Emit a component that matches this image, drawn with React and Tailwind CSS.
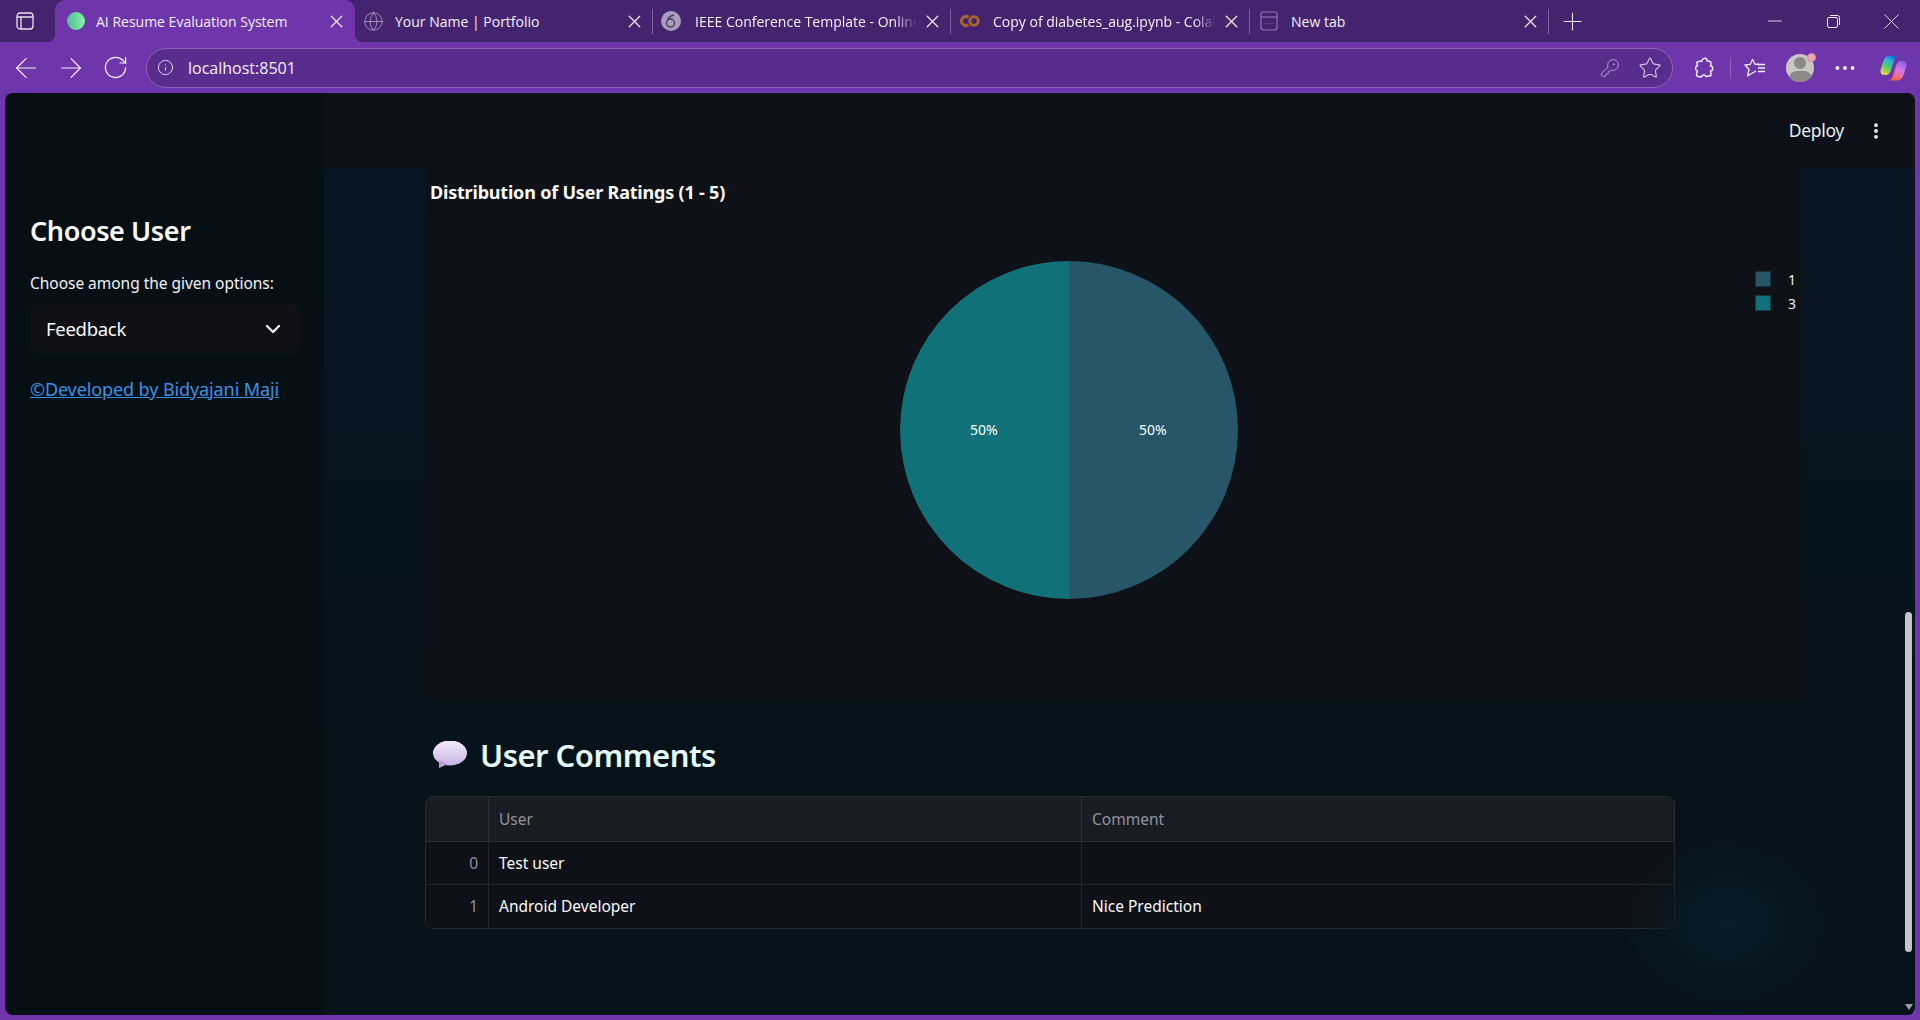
import React from 'react';
import { X, Plus, Minus, ArrowLeft, ArrowRight, RotateCw, Info, KeyRound, Star, Globe, EllipsisVertical, Ellipsis, ChevronDown } from 'lucide-react';

const Favicon = ({ kind }) => {
    if (kind === 'ai') return <span className="w-[18px] h-[18px] rounded-full bg-gradient-to-r from-[#4fbf94] to-[#86f2a6] shrink-0"></span>;
    if (kind === 'globe') return <Globe size={21} strokeWidth={1} className="text-[#a89cc0] shrink-0" />;
    if (kind === 'overleaf') return (
        <span className="w-[20px] h-[20px] rounded-full bg-[#a99cbc] shrink-0 flex items-center justify-center">
            <svg width="12" height="14" viewBox="0 0 12 14" fill="none" stroke="#45405a" strokeWidth="1.4"><circle cx="5.5" cy="9" r="4" /><path d="M9 1 C5 2 3 4 3 6" /></svg>
        </span>
    );
    if (kind === 'colab') return (
        <svg width="20" height="14" viewBox="0 0 20 14" fill="none" stroke="#a8642e" strokeWidth="3" className="shrink-0"><path d="M8.5 3.2 A4.5 4.5 0 1 0 8.5 10.8" /><circle cx="14" cy="7" r="4.2" /></svg>
    );
    return (
        <svg width="18" height="20" viewBox="0 0 18 20" fill="none" stroke="#8d76a8" strokeWidth="1.2" className="shrink-0"><rect x="1" y="1" width="16" height="18" rx="2.5" /><path d="M1 6h16" /><path d="M5.5 12.5h1M8.5 12.5h1M11.5 12.5h1" /></svg>
    );
};

const tabs = [
    { title: 'AI Resume Evaluation System', icon: 'ai', active: true, w: 'w-[300px]', pl: 'pl-[12px]', gap: 'ml-[11px]' },
    { title: 'Your Name | Portfolio', icon: 'globe', w: 'w-[298px]', pl: 'pl-[8px]', gap: 'ml-[11px]' },
    { title: 'IEEE Conference Template - Online', icon: 'overleaf', w: 'w-[298px]', fade: true, pl: 'pl-[8px]', gap: 'ml-[14px]' },
    { title: 'Copy of diabetes_aug.ipynb - Colab', icon: 'colab', w: 'w-[299px]', fade: true, pl: 'pl-[9px]', gap: 'ml-[13px]' },
    { title: 'New tab', icon: 'new', w: 'w-[299px]', pl: 'pl-[10px]', gap: 'ml-[13px]' },
];

const TabBar = () => (
    <div className="h-[42px] bg-[#45246f] flex items-center shrink-0">
        <div className="w-[55px] pr-[5px] flex justify-center shrink-0">
            <svg width="18" height="18" viewBox="0 0 18 18" fill="none" stroke="#e8e2f0" strokeWidth="1.3"><rect x="1" y="1" width="16" height="16" rx="3" /><path d="M1 5h16M5 5v12" /></svg>
        </div>
        {tabs.map((tab) => (
            <div key={tab.title} className={`${tab.w} ${tab.pl} h-[42px] flex items-center shrink-0 relative ${tab.active ? 'bg-[#6f35ab] rounded-t-[10px]' : ''}`}>
                {tab.active && <span className="absolute bottom-0 -left-[8px] w-[8px] h-[8px] bg-[radial-gradient(circle_at_0_0,#45246f_8px,#6f35ab_8.5px)]"></span>}
                {tab.active && <span className="absolute bottom-0 -right-[8px] w-[8px] h-[8px] z-10 bg-[radial-gradient(circle_at_100%_0,#45246f_8px,#6f35ab_8.5px)]"></span>}
                <Favicon kind={tab.icon} />
                <span className={`${tab.gap} text-[14px] text-[#f4f0f8] whitespace-nowrap overflow-hidden flex-1 min-w-0 font-['Open_Sans',sans-serif] ${tab.fade ? '[mask-image:linear-gradient(to_right,black_90%,transparent_100%)]' : ''}`}>{tab.title}</span>
                <X size={21} strokeWidth={1.5} className="text-[#f0ecf5] shrink-0 ml-[5px] mr-[8px]" />
                {!tab.active && <span className="absolute right-0 top-[9px] w-px h-[25px] bg-[#7a6096]"></span>}
            </div>
        ))}
        <div className="w-[46px] flex justify-center shrink-0">
            <Plus size={29} strokeWidth={0.9} className="text-[#f0ecf5]" />
        </div>
        <div className="ml-auto flex items-center text-[#f0ecf5]">
            <div className="w-[58px] flex justify-center"><Minus size={22} strokeWidth={0.9} /></div>
            <div className="w-[58px] flex justify-center">
                <svg width="13" height="13" viewBox="0 0 13 13" fill="none" stroke="currentColor" strokeWidth="1"><rect x="0.5" y="2.5" width="10" height="10" rx="1.5" /><path d="M3 0.5h7.5a2 2 0 0 1 2 2V10" /></svg>
            </div>
            <div className="w-[58px] flex justify-center"><X size={27} strokeWidth={0.8} /></div>
        </div>
    </div>
);

const ToolBar = () => (
    <div className="h-[51px] bg-[#6f35ab] flex items-center shrink-0 text-[#f4f0f8]">
        <div className="w-[45px] ml-[3px] flex justify-center"><ArrowLeft size={32} strokeWidth={0.9} /></div>
        <div className="w-[45px] flex justify-center"><ArrowRight size={32} strokeWidth={0.9} /></div>
        <div className="w-[45px] flex justify-center"><RotateCw size={27} strokeWidth={1.1} /></div>
        <div className="ml-[8px] w-[1527px] h-[40px] shrink-0 rounded-full bg-[#592d8d] border border-[#8a66b4] flex items-center">
            <Info size={17} strokeWidth={1.2} className="ml-[10px]" />
            <span className="ml-[14px] text-[16px] font-['Open_Sans',sans-serif]">localhost:8501</span>
            <KeyRound size={20} strokeWidth={1.1} className="ml-auto text-[#b9a4d3]" />
            <Star size={24} strokeWidth={1.1} className="ml-[18px] mr-[10px] text-[#d2c4e2]" />
        </div>
        <div className="ml-[9px] w-[44px] flex justify-center shrink-0">
            <svg width="20" height="22" viewBox="0 0 20 22" fill="none" stroke="currentColor" strokeWidth="1.4" strokeLinejoin="round">
                <path d="M9 2 C11 0.5 13.5 1.5 13 4 L16 4.5 Q17.5 5 17 7 L16.5 9 C19.5 9 19.5 14 16.5 14 L17 17 Q17.5 19 15.5 19 L12 19.5 C11 17.5 8 17.5 7.5 20 L4 19.5 Q2 19 2.5 17 L3.5 14 C1 14 1 9 3.5 9 L3 6.5 Q2.5 4.5 4.5 4.5 L8 4 C8 3 8.3 2.5 9 2 Z" />
            </svg>
        </div>
        <span className="ml-[4px] w-px h-[20px] bg-[#8a66b4] shrink-0"></span>
        <div className="ml-[2px] w-[44px] flex justify-center shrink-0">
            <svg width="22" height="20" viewBox="0 0 22 20" fill="none" stroke="currentColor" strokeWidth="1.3" strokeLinejoin="round">
                <path d="M15.5 6.5 L10.8 6 L8.5 1.5 L6.2 6.3 L1 7 L5 11.5 L3.5 18 L8.5 15 L12 13" />
                <path d="M13.5 6.5 H21 M14 10 H21 M14 13.5 H21" />
            </svg>
        </div>
        <div className="ml-[1px] w-[44px] flex justify-center shrink-0 relative">
            <div className="w-[28px] h-[28px] rounded-full bg-[#c8c6c2] relative overflow-hidden flex justify-center">
                <span className="absolute top-[3px] w-[12px] h-[12px] rounded-full bg-[#8b8985]"></span>
                <span className="absolute top-[17px] w-[23px] h-[16px] rounded-full bg-[#8b8985]"></span>
            </div>
            <span className="absolute left-[29px] -top-[1px] w-[9px] h-[9px] rounded-full bg-[#f5a5a5] border border-[#c98cc0]"></span>
        </div>
        <div className="ml-[1px] w-[44px] flex justify-center shrink-0"><Ellipsis size={26} strokeWidth={1.6} /></div>
        <div className="ml-[4px] w-[44px] flex justify-center shrink-0">
            <svg width="27" height="26" viewBox="0 0 27 26">
                <defs>
                    <linearGradient id="cpA" x1="0.75" y1="0" x2="0.2" y2="1"><stop offset="0" stopColor="#1560d8" /><stop offset="0.3" stopColor="#2bb3dc" /><stop offset="0.6" stopColor="#4fd070" /><stop offset="1" stopColor="#f0d53c" /></linearGradient>
                    <linearGradient id="cpB" x1="0.75" y1="0" x2="0.25" y2="1"><stop offset="0" stopColor="#8a5cf0" /><stop offset="0.4" stopColor="#d278e8" /><stop offset="0.75" stopColor="#f56c8a" /><stop offset="1" stopColor="#f5622c" /></linearGradient>
                </defs>
                <path d="M10 0.5 H18 Q15.5 1 14.5 4 L11 15 Q9.5 20 6 20 H4 Q0 20 0.5 15 L3 7 Q5 0.5 10 0.5 Z" fill="url(#cpA)" />
                <path d="M17 25.5 H9 Q11.5 25 12.5 22 L16 11 Q17.5 6 21 6 H23 Q27 6 26.5 11 L24 19 Q22 25.5 17 25.5 Z" fill="url(#cpB)" />
            </svg>
        </div>
    </div>
);

const Sidebar = () => (
    <aside className="w-[319px] bg-[#060f14] shrink-0 px-[25px] pt-[121px] font-['Noto_Sans',sans-serif]">
        <h2 className="text-[27px] leading-[34px] font-semibold text-[#fafafa] tracking-[-0.4px]">Choose User</h2>
        <p className="mt-[23px] text-[15.5px] leading-[24px] text-[#f0f2f4] whitespace-nowrap tracking-[-0.03px]">Choose among the given options:</p>
        <div className="mt-[9px] h-[50px] w-[269px] rounded-lg bg-[#0f1117] flex items-center pl-[16px] pr-[14px] justify-between">
            <span className="text-[18.5px] text-[#fafafa] tracking-[-0.3px]">Feedback</span>
            <ChevronDown size={24} strokeWidth={2.2} className="text-white" />
        </div>
        <a href="#" className="block mt-[22px] text-[18px] leading-[26px] text-[#3a92e4] underline tracking-[-0.1px] whitespace-nowrap">©Developed by Bidyajani Maji</a>
    </aside>
);

const PieChart = () => (
    <svg width="340" height="340" viewBox="0 0 340 340">
        <path d="M170 1 A169 169 0 0 1 170 339 Z" fill="#265667" />
        <path d="M170 1 A169 169 0 0 0 170 339 Z" fill="#107278" />
    </svg>
);

const CommentsTable = () => (
    <div className="mt-[19px] w-[1250px] rounded-lg border border-[#262a31] overflow-hidden text-[15.5px]">
        <div className="grid grid-cols-[63px_593px_1fr] h-[45px] bg-[#1a1c24] text-[#8f939b] items-center border-b border-[#2b2e36]">
            <div className="h-full border-r border-[#2b2e36]"></div>
            <div className="h-full flex items-center pl-[10px] pt-[1px] border-r border-[#2b2e36]">User</div>
            <div className="h-full flex items-center pl-[10px] pt-[1px]">Comment</div>
        </div>
        {[['0', 'Test user', ''], ['1', 'Android Developer', 'Nice Prediction']].map((row, i) => (
            <div key={row[0]} className={`grid grid-cols-[63px_593px_1fr] h-[43px] bg-[#0e1117] text-[#fafafa] items-center ${i === 0 ? 'border-b border-[#23262c]' : ''}`}>
                <div className="h-full flex items-center justify-end pr-[10px] pt-[1px] text-[#8f939b] border-r border-[#23262c]">{row[0]}</div>
                <div className="h-full flex items-center pl-[10px] pt-[1px] border-r border-[#23262c]">{row[1]}</div>
                <div className="h-full flex items-center pl-[10px] pt-[1px]">{row[2]}</div>
            </div>
        ))}
    </div>
);

const Main = () => (
    <main className="flex-1 min-w-0 flex flex-col relative bg-[#06131b]">
        <header className="h-[75px] bg-[#0e1117] shrink-0 flex items-center justify-end font-['Noto_Sans',sans-serif] text-[#e4f2f0]">
            <span className="text-[17.5px] tracking-[-0.3px]">Deploy</span>
            <EllipsisVertical size={20} strokeWidth={2.6} className="ml-[22px] mr-[29px]" />
        </header>
        <div className="flex-1 pl-[101px] pr-[113px] relative font-['Noto_Sans',sans-serif] bg-[linear-gradient(to_bottom,#061622_0%,#07131b_70%)]">
            <div className="h-[532px] bg-[#0e1117] relative px-[5px] pt-[12px]">
                <h3 className="text-[18px] leading-[24px] font-bold text-[#fafafa] tracking-[-0.2px]">Distribution of User Ratings (1 - 5)</h3>
                <div className="absolute left-[474px] top-[92px] w-[340px]"><PieChart /></div>
                <span className="absolute left-[545px] top-[253px] text-[14px] leading-[18px] text-white">50%</span>
                <span className="absolute left-[714px] top-[253px] text-[14px] leading-[18px] text-white">50%</span>
                <div className="absolute left-[1330px] top-[103px] flex flex-col gap-[8px] text-[14px] text-[#eeeeee]">
                    <div className="flex items-center h-[16px]"><span className="w-[16px] h-[16px] bg-[#265667] border border-[#14303c]"></span><span className="ml-[17px]">1</span></div>
                    <div className="flex items-center h-[16px]"><span className="w-[16px] h-[16px] bg-[#107278] border border-[#0e3a40]"></span><span className="ml-[17px]">3</span></div>
                </div>
            </div>
            <div className="mt-[33px] flex items-center h-[44px] pl-[7px]">
                <svg width="35" height="28" viewBox="0 0 35 28" className="shrink-0">
                    <defs><linearGradient id="bubble" x1="0" y1="0" x2="0" y2="1"><stop offset="0" stopColor="#f3ecfa" /><stop offset="1" stopColor="#c9b4e6" /></linearGradient></defs>
                    <ellipse cx="18" cy="12" rx="17" ry="12.5" fill="url(#bubble)" />
                    <path d="M7 19 L7 27 L16 23 Z" fill="#b9a0dc" />
                </svg>
                <h2 className="ml-[13px] text-[31px] leading-[44px] font-semibold text-[#e6fbf8] tracking-[-0.5px]">User Comments</h2>
            </div>
            <CommentsTable />
            <div className="absolute left-[1293px] top-[665px] w-[220px] h-[180px] pointer-events-none bg-[radial-gradient(closest-side,#081d27,transparent)]"></div>
        </div>
        <div className="absolute right-[3px] top-[519px] w-[7px] h-[340px] rounded-full bg-[#c4c4c4]"></div>
        <div className="absolute right-[2px] bottom-[5px] w-0 h-0 border-l-[4px] border-r-[4px] border-t-[6px] border-l-transparent border-r-transparent border-t-[#a0a0a0]"></div>
    </main>
);

const App = () => (
    <div className="w-[1920px] h-[1020px] bg-[#6f35ab] flex flex-col overflow-hidden">
        <TabBar />
        <ToolBar />
        <div className="flex-1 mx-[5px] mb-[5px] rounded-lg overflow-hidden flex min-h-0">
            <Sidebar />
            <Main />
        </div>
    </div>
);

export default App;
